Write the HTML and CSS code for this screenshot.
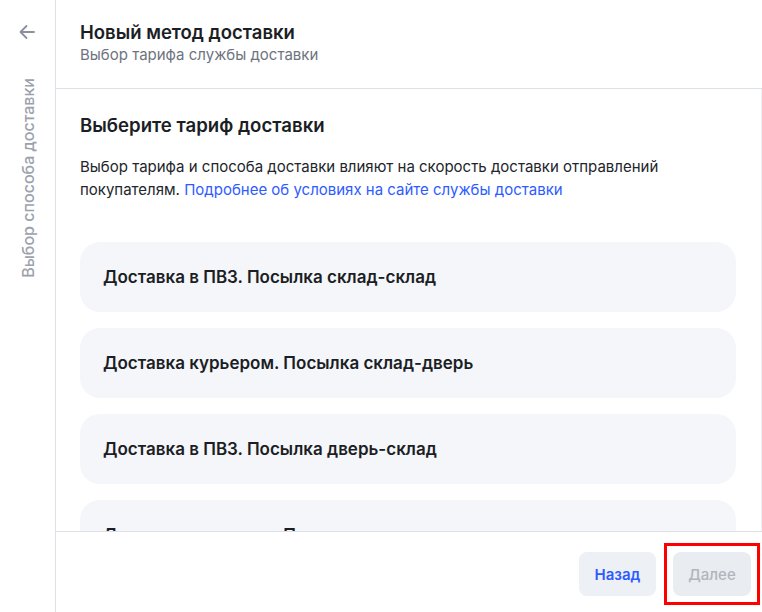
FILE: index.html
```html
<!DOCTYPE html>
<html lang="ru">
<head>
    <meta charset="UTF-8">
    <meta name="viewport" content="width=device-width, initial-scale=1.0">
    <title>Новый метод доставки</title>
    <link rel="stylesheet" href="styles.css">
</head>
<body>
    <div class="app">
        <aside class="steps">
            <button class="back-btn" aria-label="Назад">
                <svg width="20" height="20" viewBox="0 0 20 20" fill="none">
                    <path d="M17 10H3.5M9.5 4L3.5 10L9.5 16" stroke="currentColor" stroke-width="1.8" stroke-linecap="round" stroke-linejoin="round"/>
                </svg>
            </button>
            <div class="step-title">Выбор способа доставки</div>
        </aside>
        <main class="panel">
            <header class="panel-header">
                <h1>Новый метод доставки</h1>
                <div class="subtitle">Выбор тарифа службы доставки</div>
            </header>
            <section class="panel-body">
                <h2>Выберите тариф доставки</h2>
                <p class="hint">Выбор тарифа и способа доставки влияют на скорость доставки отправлений покупателям. <a href="#">Подробнее об условиях на сайте службы доставки</a></p>
                <div class="tariffs">
                    <div class="tariff">Доставка в ПВЗ. Посылка склад-склад</div>
                    <div class="tariff">Доставка курьером. Посылка склад-дверь</div>
                    <div class="tariff">Доставка в ПВЗ. Посылка дверь-склад</div>
                    <div class="tariff">Доставка курьером. Посылка дверь-дверь</div>
                </div>
            </section>
            <footer class="panel-footer">
                <button class="btn btn-back">Назад</button>
                <span class="highlight">
                    <button class="btn btn-next" disabled>Далее</button>
                </span>
            </footer>
        </main>
    </div>
</body>
</html>
```

FILE: styles.css
```css
body {
    margin: 0;
    font-family: Inter, "Noto Sans", Arial, sans-serif;
    color: #1b1e24;
    background: #fff;
}
.app {
    display: flex;
    height: 612px;
    overflow: hidden;
}
.steps {
    width: 55px;
    flex-shrink: 0;
    border-right: 1px solid #dde0e6;
    display: flex;
    flex-direction: column;
    align-items: center;
}
.back-btn {
    margin-top: 22px;
    margin-left: -2px;
    padding: 0;
    border: 0;
    background: none;
    color: #8a909c;
    width: 20px;
    height: 20px;
    cursor: pointer;
}
.step-title {
    margin-top: 36px;
    writing-mode: vertical-rl;
    transform: rotate(180deg);
    font-size: 16px;
    font-weight: 500;
    color: #9ca2ad;
    white-space: nowrap;
}
.panel {
    flex: 1;
    display: flex;
    flex-direction: column;
    min-width: 0;
}
.panel-header {
    padding: 20px 24px 0;
    height: 68px;
    border-bottom: 1px solid #dde0e6;
}
.panel-header h1 {
    margin: 0;
    font-size: 18.5px;
    line-height: 24px;
    font-weight: 600;
}
.subtitle {
    margin-top: 1px;
    font-size: 15px;
    line-height: 20px;
    color: #6e7380;
}
.panel-body {
    flex: 1;
    overflow: hidden;
    padding: 24px 25px 0 24px;
    border-right: 1px solid #eef0f3;
}
.panel-body h2 {
    margin: 0;
    font-size: 18.6px;
    line-height: 24px;
    font-weight: 600;
}
.hint {
    margin: 18px 0 0;
    font-size: 15px;
    line-height: 23px;
    color: #22252b;
}
.hint a {
    color: #2e5bff;
    text-decoration: none;
}
.tariffs {
    margin-top: 41px;
    display: flex;
    flex-direction: column;
    gap: 16px;
}
.tariff {
    height: 70px;
    display: flex;
    align-items: center;
    padding-left: 23px;
    border-radius: 20px;
    background: #f5f6fa;
    font-size: 17px;
    font-weight: 600;
    cursor: pointer;
}
.panel-footer {
    height: 81px;
    box-sizing: border-box;
    border-top: 1px solid #dde0e6;
    display: flex;
    align-items: flex-start;
    justify-content: flex-end;
    gap: 17px;
    padding: 20px 11px 0 0;
}
.btn {
    height: 44px;
    padding: 0;
    border: 0;
    border-radius: 8px;
    font-family: inherit;
    font-size: 15px;
    font-weight: 500;
    cursor: pointer;
}
.btn-back {
    width: 77px;
    background: #edf0f4;
    color: #2e5bff;
    font-weight: 600;
}
.btn-next {
    display: block;
    width: 78px;
    background: #e9ecf0;
    color: #b1b5bc;
    cursor: default;
}
.highlight {
    display: block;
    outline: 3px solid #ff0000;
    outline-offset: 6px;
}
```
